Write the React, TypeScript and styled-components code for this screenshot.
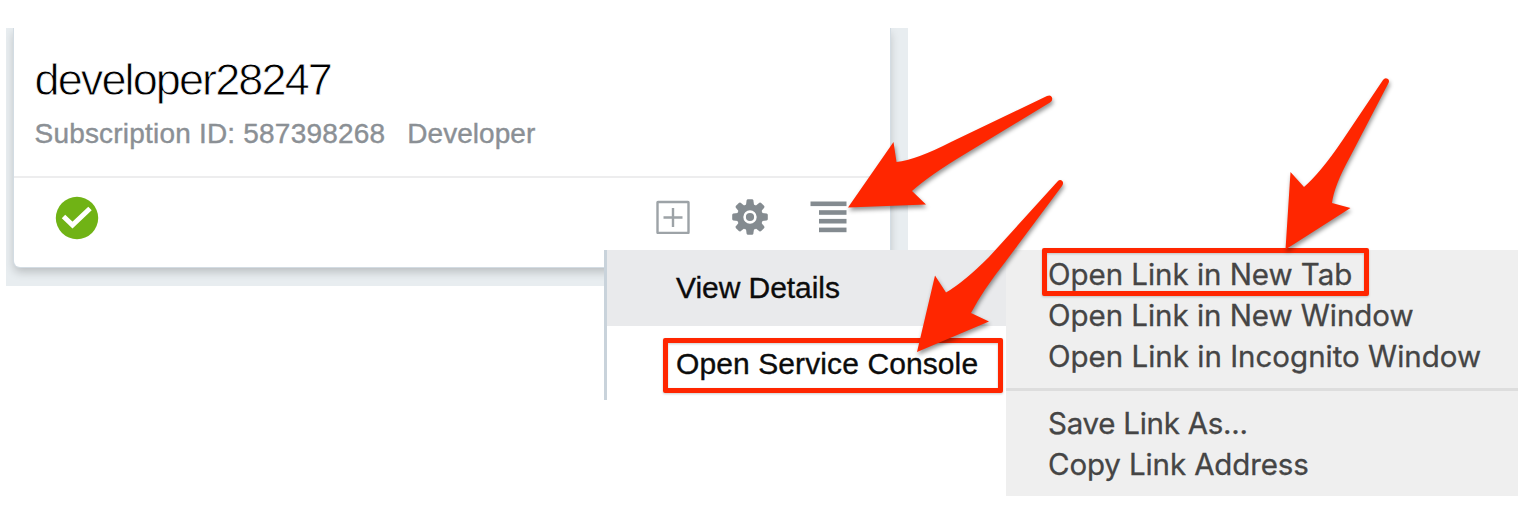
import React from "react";
import styled, { createGlobalStyle } from "styled-components";

const Global = createGlobalStyle`
  * { box-sizing: border-box; }
  body { margin: 0; background: #fff; overflow: hidden; }
`;

const Page = styled.main`
  position: relative;
  width: 1540px;
  height: 512px;
  padding: 28px 0 0 6px;
  background: #fff;
  font-family: "Liberation Sans", Arial, sans-serif;
`;

const Backdrop = styled.section`
  width: 902px;
  height: 258px;
  padding: 0 18px 19px 8px;
  background: #e8edf0;
  overflow: hidden;
`;

const Card = styled.article`
  display: flex;
  flex-direction: column;
  height: 239px;
  background: #fff;
  border-radius: 0 0 6px 6px;
  box-shadow: 0 0 0 1px #d3dce3, 0 5px 10px 0 rgba(0, 0, 0, 0.2);
`;

const CardHeader = styled.header`
  height: 150px;
  padding: 26px 0 0 20.5px;
  border-bottom: 2px solid #ededee;
`;

const Title = styled.h1`
  margin: 0;
  font-size: 45px;
  line-height: 52px;
  font-weight: 400;
  letter-spacing: -1.88px;
  color: #000;
  -webkit-text-stroke: 0.8px #fff;
`;

const Meta = styled.div`
  display: flex;
  gap: 22px;
  margin-top: 12px;
  font-size: 28px;
  line-height: 32px;
  color: #8b9095;
  -webkit-text-stroke: 0.4px #8b9095;
`;

const MetaItem = styled.span<{ $spacing: number }>`
  letter-spacing: ${(p) => p.$spacing}px;
`;

const CardFooter = styled.footer`
  display: flex;
  align-items: center;
  justify-content: space-between;
  height: 80px;
  padding: 0 43px 0 41px;
`;

const Actions = styled.div`
  display: flex;
  align-items: center;
  gap: 42px;
  padding-bottom: 3px;
`;

const Icon = styled.svg`
  display: block;
`;

const Dropdown = styled.nav`
  position: absolute;
  left: 604px;
  top: 250px;
  width: 402px;
  height: 150px;
  border-left: 3px solid #c9d3db;
  background: #fff;
`;

const DropdownItem = styled.div<{ $active?: boolean; $spacing: number }>`
  position: relative;
  display: flex;
  align-items: center;
  height: 76px;
  padding-left: 69px;
  font-size: 30px;
  letter-spacing: ${(p) => p.$spacing}px;
  color: #0c0c0c;
  -webkit-text-stroke: 0.35px #0c0c0c;
  background: ${(p) => (p.$active ? "#e9eaec" : "transparent")};
`;

const ContextMenu = styled.nav`
  position: absolute;
  left: 1006px;
  top: 250px;
  width: 512px;
  height: 246px;
  padding-top: 3px;
  background: #efefef;
  font-family: Inter, "Liberation Sans", sans-serif;
`;

const ContextItem = styled.div<{ $spacing: number }>`
  position: relative;
  display: flex;
  align-items: center;
  height: 41.2px;
  padding-left: 42px;
  font-size: 29.5px;
  letter-spacing: ${(p) => p.$spacing}px;
  white-space: nowrap;
  color: #454545;
  -webkit-text-stroke: 0.3px #454545;
`;

const Separator = styled.hr`
  height: 3px;
  margin: 11.4px 0 11px;
  border: 0;
  background: #dddddd;
`;

const Highlight = styled.span<{ $x: number; $y: number; $w: number; $h: number }>`
  position: absolute;
  left: ${(p) => p.$x}px;
  top: ${(p) => p.$y}px;
  width: ${(p) => p.$w}px;
  height: ${(p) => p.$h}px;
  border: 5px solid #ff2600;
  border-radius: 2px;
  filter: drop-shadow(0 1px 1px rgba(0, 0, 0, 0.2));
`;

const Annotations = styled.svg`
  position: absolute;
  left: 0;
  top: 0;
  filter: drop-shadow(1px 3px 2px rgba(0, 0, 0, 0.42));
`;

const CheckIcon = () => (
  <Icon width="44" height="44" viewBox="0 0 44 44">
    <circle cx="22" cy="22" r="21.2" fill="#70b315" />
    <path d="M8.5 20.500 17.500 29 35 12.500" fill="none" stroke="#fff" strokeWidth="5" />
  </Icon>
);

const AddIcon = () => (
  <Icon width="34" height="34" viewBox="0 0 34 34" fill="none" stroke="#9da3a7" strokeWidth="2.4">
    <rect x="1.500" y="2" width="31" height="31" rx="0.5" />
    <path d="M7.500 17.500h19M17 8v19" />
  </Icon>
);

const teeth = [0, 45, 90, 135, 180, 225, 270, 315];

const GearIcon = () => (
  <Icon width="36" height="36" viewBox="-18 -18 36 36">
    {teeth.map((angle) => (
      <path
        key={angle}
        d="M-4 -12 L-3.4 -16.6 Q-3.2 -17.8 -2 -17.8 H2 Q3.2 -17.8 3.4 -16.6 L4 -12Z"
        fill="#848b90"
        transform={`rotate(${angle})`}
      />
    ))}
    <circle r="13.1" fill="#848b90" />
    <circle r="5.4" fill="#848b90" stroke="#fff" strokeWidth="2.6" />
  </Icon>
);

const ListIcon = () => (
  <Icon width="37" height="32" viewBox="0 0 37 32" fill="#848b90">
    <rect x="0.5" y="0.5" width="36" height="4.6" />
    <rect x="9" y="9.2" width="27.5" height="4.6" />
    <rect x="9" y="17.900" width="27.5" height="4.6" />
    <rect x="9" y="26.600" width="27.5" height="4.6" />
  </Icon>
);

export default function App() {
  return (
    <>
      <Global />
      <Page>
        <Backdrop>
          <Card>
            <CardHeader>
              <Title>developer28247</Title>
              <Meta>
                <MetaItem $spacing={0.2}>Subscription ID: 587398268</MetaItem>
                <MetaItem $spacing={0.05}>Developer</MetaItem>
              </Meta>
            </CardHeader>
            <CardFooter>
              <CheckIcon />
              <Actions>
                <AddIcon />
                <GearIcon />
                <ListIcon />
              </Actions>
            </CardFooter>
          </Card>
        </Backdrop>

        <Dropdown>
          <DropdownItem $active $spacing={-0.05}>View Details</DropdownItem>
          <DropdownItem $spacing={0.1}>
            Open Service Console
            <Highlight $x={56} $y={12} $w={340} $h={55} />
          </DropdownItem>
        </Dropdown>

        <ContextMenu>
          <ContextItem $spacing={-0.04}>
            Open Link in New Tab
            <Highlight $x={36} $y={-5} $w={327} $h={48} />
          </ContextItem>
          <ContextItem $spacing={-0.04}>Open Link in New Window</ContextItem>
          <ContextItem $spacing={0}>Open Link in Incognito Window</ContextItem>
          <Separator />
          <ContextItem $spacing={-0.26}>Save Link As...</ContextItem>
          <ContextItem $spacing={-0.12}>Copy Link Address</ContextItem>
        </ContextMenu>

        <Annotations width="1540" height="512" viewBox="0 0 1540 512" fill="#ff2600">
          <path d="M848 207.5 L893.5 142 L896.5 162 Q916 160 952 141.5 L1047 96 Q1051 94.5 1052 97.5 Q1053 100.5 1050 102.5 L965 154 Q930 175 912 191 L926 204.5 Z" />
          <path d="M917 352 L935 275.5 L946 292.5 Q964 282 989 257 L1057.500 181.500 Q1060 179 1062.300 181 Q1064 183 1062 186 L1006 261 Q983 290 971 313 L989 321.500 Z" />
          <path d="M1285.500 249.500 L1290.500 172 L1304 187 Q1321 172 1342 141 L1383 80 Q1385 77 1388 79 Q1390 81 1388 84 L1350 157 Q1334 186 1332 203 L1350.500 208 Z" />
        </Annotations>
      </Page>
    </>
  );
}
